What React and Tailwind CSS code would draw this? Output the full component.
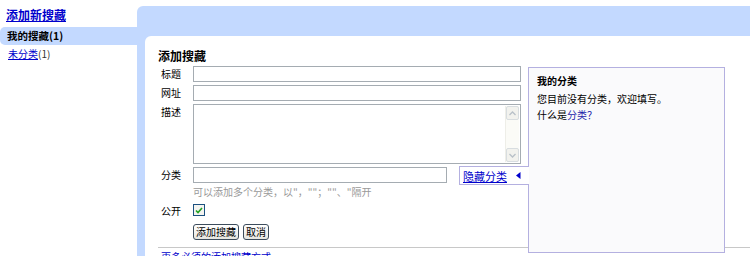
import React from "react";

const font = { fontFamily: '"Noto Sans CJK SC", "Liberation Sans", sans-serif' };

function Row({ label, children, className = "" }) {
  return (
    <div className={`flex items-start ${className}`}>
      <div className="w-[35px] pl-[3px] text-[10px] leading-[16px] text-black">{label}</div>
      {children}
    </div>
  );
}

export default function App() {
  return (
    <div className="w-[750px] h-[256px] overflow-hidden bg-white flex text-black" style={font}>
      {/* Sidebar */}
      <div className="w-[137px] shrink-0 pt-[7px]">
        <a className="block pl-[6px] text-[12px] font-bold leading-[16px] text-[#0000cc] underline">添加新搜藏</a>
        <div className="mt-[4px] h-[18px] bg-[#c3d9ff] rounded-l-[5px] pl-[7px] text-[10.5px] font-bold leading-[18px]">我的搜藏(1)</div>
        <div className="mt-[1px] pl-[8px] text-[10px] leading-[16px]">
          <a className="text-[#0000cc] underline">未分类</a>
          <span className="text-[#333]">(1)</span>
        </div>
      </div>

      {/* Main */}
      <div className="flex-1 mt-[6px] bg-[#c3d9ff] rounded-tl-[6px] pt-[30px] pl-[8px] flex flex-col">
        <div className="flex-1 bg-white rounded-tl-[6px] pl-[13px] pt-[10px] relative">
          <div className="h-[20px] text-[12px] font-bold leading-[20px]">添加搜藏</div>

          <Row label="标题" className="mb-[3px]">
            <div className="w-[328px] h-[16px] border border-[#a5acb2] bg-white" />
          </Row>
          <Row label="网址" className="mb-[3px]">
            <div className="w-[328px] h-[16px] border border-[#a5acb2] bg-white" />
          </Row>
          <Row label="描述" className="mb-[3px]">
            <div className="w-[328px] h-[60px] border border-[#a5acb2] bg-white flex justify-end p-[1px]">
              <div className="w-[14px] h-full bg-[#fbfbf7] border-l border-[#eeeee8] flex flex-col justify-between">
                <div className="h-[14px] border border-[#d8dde0] rounded-[2px] bg-[#f2f2ee] flex items-center justify-center">
                  <svg width="7" height="5" viewBox="0 0 7 5"><path d="M0.5 4 L3.5 1 L6.5 4" fill="none" stroke="#b8c0c8" strokeWidth="1.3" /></svg>
                </div>
                <div className="h-[14px] border border-[#d8dde0] rounded-[2px] bg-[#f2f2ee] flex items-center justify-center">
                  <svg width="7" height="5" viewBox="0 0 7 5"><path d="M0.5 1 L3.5 4 L6.5 1" fill="none" stroke="#b8c0c8" strokeWidth="1.3" /></svg>
                </div>
              </div>
            </div>
          </Row>
          <Row label="分类">
            <div className="w-[254px] h-[16px] border border-[#a5acb2] bg-white" />
            <div className="ml-[12px] -mt-[1px] w-[70px] h-[19px] border border-r-0 border-[#b4b0e0] bg-white flex items-center pl-[3px] relative z-10">
              <a className="text-[11px] leading-[14px] text-[#0000cc] underline">隐藏分类</a>
              <svg className="ml-[9px]" width="5" height="7" viewBox="0 0 5 7"><path d="M4.5 0 L0 3.5 L4.5 7 Z" fill="#0000cc" /></svg>
            </div>
          </Row>
          <div className="pl-[35px] text-[10px] leading-[14px] text-[#999]">可以添加多个分类，以"，""；""、"隔开</div>

          <Row label="公开" className="mt-[4px]">
            <div className="w-[12px] h-[12px] border border-[#1c5180] bg-[#f4f4f0] flex items-center justify-center mt-[1px]">
              <svg width="8" height="7" viewBox="0 0 8 7"><path d="M1 3.5 L3 5.5 L7 1" fill="none" stroke="#21a121" strokeWidth="1.6" /></svg>
            </div>
          </Row>
          <div className="pl-[35px] mt-[5px] flex gap-[4px]">
            <button className="h-[16px] px-[2px] border border-[#3c4c5c] rounded-[3px] bg-gradient-to-b from-[#ffffff] to-[#e6e6e0] text-[10px] leading-[14px] text-black" style={font}>添加搜藏</button>
            <button className="h-[16px] px-[2px] border border-[#3c4c5c] rounded-[3px] bg-gradient-to-b from-[#ffffff] to-[#e6e6e0] text-[10px] leading-[14px] text-black" style={font}>取消</button>
          </div>

          <div className="mt-[7px] border-t border-[#c8c8c8]" />
          <div className="pt-[3px] pl-[3px] text-[10px] leading-[12px] text-[#0000cc]">更多必须的添加搜藏方式</div>

          {/* Category popup */}
          <div className="absolute left-[383px] top-[31px] w-[197px] h-[186px] border border-[#b4b0e0] bg-[#fafafc] pl-[8px] pt-[6px]">
            <div className="text-[10px] font-bold leading-[14px]">我的分类</div>
            <div className="mt-[3px] text-[10px] leading-[16px]">您目前没有分类，欢迎填写。</div>
            <div className="text-[10px] leading-[16px]">什么是<a className="text-[#2222aa]">分类？</a></div>
          </div>
        </div>
      </div>
    </div>
  );
}
